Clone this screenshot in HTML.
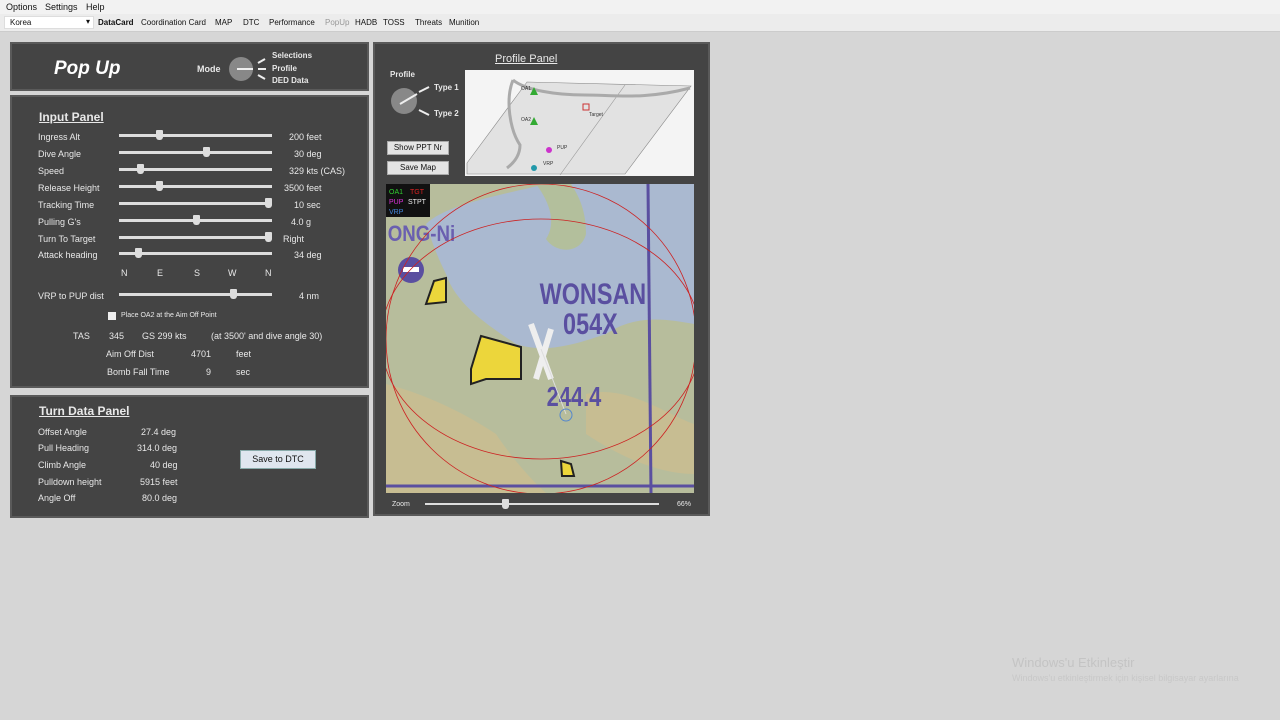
<!DOCTYPE html>
<html><head><style>
*{margin:0;padding:0;box-sizing:border-box}
body{width:1280px;height:720px;background:#d6d6d6;font-family:"Liberation Sans",sans-serif;position:relative;overflow:hidden;font-size:9px;color:#e8e8e8}
.a{position:absolute;white-space:nowrap}
.menu{position:absolute;left:0;top:0;width:1280px;height:14px;background:#f2f2f2;color:#111;font-size:9px}
.tb{position:absolute;left:0;top:14px;width:1280px;height:18px;background:#ececec;color:#111;font-size:8px;border-bottom:1px solid #ccc}
.panel{position:absolute;background:#444;border:2px solid #5a5a5a}
.sl{position:absolute;height:3px;background:#ddd}
.th{position:absolute;width:7px;height:10px;background:#ddd;border-radius:1px 1px 3px 3px}
.u{text-decoration:underline;font-size:12px;font-weight:bold}
.btn{position:absolute;background:#e4e4e4;color:#111;border:1px solid #aaa;font-size:8px;text-align:center}
</style></head><body>
<div class="menu"><span class="a" style="left:6px;top:2px">Options</span><span class="a" style="left:45px;top:2px">Settings</span><span class="a" style="left:86px;top:2px">Help</span></div>
<div class="tb">
<div class="a" style="left:4px;top:2px;width:90px;height:13px;background:#fff;border:1px solid #ddd"></div>
<span class="a" style="left:10px;top:4px">Korea</span><span class="a" style="left:86px;top:3px">▾</span>
<span class="a" style="left:98px;top:4px;font-weight:bold">DataCard</span>
<span class="a" style="left:141px;top:4px">Coordination Card</span>
<span class="a" style="left:215px;top:4px">MAP</span><span class="a" style="left:243px;top:4px">DTC</span>
<span class="a" style="left:269px;top:4px">Performance</span><span class="a" style="left:325px;top:4px;color:#999">PopUp</span>
<span class="a" style="left:355px;top:4px">HADB</span><span class="a" style="left:383px;top:4px">TOSS</span>
<span class="a" style="left:415px;top:4px">Threats</span><span class="a" style="left:449px;top:4px">Munition</span>
</div>

<div class="panel" style="left:10px;top:42px;width:359px;height:49px">
<span class="a" style="left:42px;top:14px;font-size:19px;font-weight:bold;font-style:italic;color:#fff">Pop Up</span>
<span class="a" style="left:185px;top:20px;font-weight:bold">Mode</span>
<svg class="a" style="left:213px;top:6px" width="60" height="38"><circle cx="16" cy="19" r="12" fill="#888"/><line x1="12" y1="19" x2="28" y2="19" stroke="#eee" stroke-width="2"/><line x1="33" y1="13" x2="40" y2="9" stroke="#eee" stroke-width="2"/><line x1="33" y1="19" x2="41" y2="19" stroke="#eee" stroke-width="2"/><line x1="33" y1="25" x2="40" y2="29" stroke="#eee" stroke-width="2"/></svg>
<span class="a" style="left:260px;top:7px;font-weight:bold;font-size:8px">Selections</span>
<span class="a" style="left:260px;top:20px;font-weight:bold;font-size:8px">Profile</span>
<span class="a" style="left:260px;top:32px;font-weight:bold;font-size:8px">DED Data</span>
</div>

<div class="panel" style="left:10px;top:95px;width:359px;height:293px">
<span class="a u" style="left:27px;top:13px">Input  Panel</span>
<span class="a" style="left:26px;top:35px">Ingress Alt</span><div class="sl" style="left:107px;top:37px;width:153px"></div><div class="th" style="left:144px;top:33px"></div><span class="a" style="left:277px;top:35px">200 feet</span>
<span class="a" style="left:26px;top:52px">Dive Angle</span><div class="sl" style="left:107px;top:54px;width:153px"></div><div class="th" style="left:191px;top:50px"></div><span class="a" style="left:282px;top:52px">30 deg</span>
<span class="a" style="left:26px;top:69px">Speed</span><div class="sl" style="left:107px;top:71px;width:153px"></div><div class="th" style="left:125px;top:67px"></div><span class="a" style="left:277px;top:69px">329 kts (CAS)</span>
<span class="a" style="left:26px;top:86px">Release Height</span><div class="sl" style="left:107px;top:88px;width:153px"></div><div class="th" style="left:144px;top:84px"></div><span class="a" style="left:272px;top:86px">3500 feet</span>
<span class="a" style="left:26px;top:103px">Tracking Time</span><div class="sl" style="left:107px;top:105px;width:153px"></div><div class="th" style="left:253px;top:101px"></div><span class="a" style="left:282px;top:103px">10 sec</span>
<span class="a" style="left:26px;top:120px">Pulling G's</span><div class="sl" style="left:107px;top:122px;width:153px"></div><div class="th" style="left:181px;top:118px"></div><span class="a" style="left:279px;top:120px">4.0 g</span>
<span class="a" style="left:26px;top:137px">Turn To Target</span><div class="sl" style="left:107px;top:139px;width:153px"></div><div class="th" style="left:253px;top:135px"></div><span class="a" style="left:271px;top:137px">Right</span>
<span class="a" style="left:26px;top:153px">Attack heading</span><div class="sl" style="left:107px;top:155px;width:153px"></div><div class="th" style="left:123px;top:151px"></div><span class="a" style="left:282px;top:153px">34 deg</span>
<span class="a" style="left:109px;top:171px">N</span><span class="a" style="left:145px;top:171px">E</span><span class="a" style="left:182px;top:171px">S</span><span class="a" style="left:216px;top:171px">W</span><span class="a" style="left:253px;top:171px">N</span>
<span class="a" style="left:26px;top:194px">VRP to PUP dist</span><div class="sl" style="left:107px;top:196px;width:153px"></div><div class="th" style="left:218px;top:192px"></div><span class="a" style="left:287px;top:194px">4 nm</span>
<div class="a" style="left:96px;top:215px;width:8px;height:8px;background:#eee"></div><span class="a" style="left:109px;top:215px;font-size:7px">Place OA2 at the Aim Off Point</span>
<span class="a" style="left:61px;top:234px">TAS</span><span class="a" style="left:97px;top:234px">345</span><span class="a" style="left:130px;top:234px">GS  299   kts</span><span class="a" style="left:199px;top:234px">(at 3500' and dive angle 30)</span>
<span class="a" style="left:94px;top:252px">Aim Off Dist</span><span class="a" style="left:179px;top:252px">4701</span><span class="a" style="left:224px;top:252px">feet</span>
<span class="a" style="left:95px;top:270px">Bomb Fall Time</span><span class="a" style="left:194px;top:270px">9</span><span class="a" style="left:224px;top:270px">sec</span>
</div>

<div class="panel" style="left:10px;top:395px;width:359px;height:123px">
<span class="a u" style="left:27px;top:7px">Turn  Data  Panel</span>
<span class="a" style="left:26px;top:30px">Offset Angle</span><span class="a" style="left:129px;top:30px">27.4  deg</span>
<span class="a" style="left:26px;top:46px">Pull Heading</span><span class="a" style="left:125px;top:46px">314.0  deg</span>
<span class="a" style="left:26px;top:63px">Climb Angle</span><span class="a" style="left:138px;top:63px">40  deg</span>
<span class="a" style="left:26px;top:80px">Pulldown height</span><span class="a" style="left:128px;top:80px">5915  feet</span>
<span class="a" style="left:26px;top:96px">Angle Off</span><span class="a" style="left:130px;top:96px">80.0  deg</span>
<div class="btn" style="left:228px;top:53px;width:76px;height:19px;background:#dfe6ef;border-color:#8aa;font-size:9px;line-height:17px">Save to DTC</div>
</div>

<div class="panel" style="left:373px;top:42px;width:337px;height:474px">
<span class="a" style="left:120px;top:9px;font-size:11px;text-decoration:underline">Profile  Panel</span>
<span class="a" style="left:15px;top:26px;font-weight:bold;font-size:8px">Profile</span>
<svg class="a" style="left:12px;top:38px" width="45" height="40"><circle cx="17" cy="19" r="13" fill="#888"/><line x1="13" y1="22" x2="30" y2="12" stroke="#eee" stroke-width="2"/><line x1="32" y1="10" x2="42" y2="5" stroke="#eee" stroke-width="2"/><line x1="32" y1="28" x2="42" y2="33" stroke="#eee" stroke-width="2"/></svg>
<span class="a" style="left:59px;top:39px;font-weight:bold;font-size:8px">Type 1</span>
<span class="a" style="left:59px;top:65px;font-weight:bold;font-size:8px">Type 2</span>
<div class="btn" style="left:12px;top:97px;width:62px;height:14px;line-height:12px">Show PPT Nr</div>
<div class="btn" style="left:12px;top:117px;width:62px;height:14px;line-height:12px">Save Map</div>
<svg class="a" style="left:90px;top:26px" width="229" height="106"><rect width="229" height="106" fill="#f4f4f4"/>
<polygon points="2,93 62,12 226,16 160,104 2,104" fill="#e2e2e2" stroke="#888" stroke-width="0.6"/>
<line x1="95" y1="105" x2="160" y2="15" stroke="#999" stroke-width="0.6"/>
<path d="M48,10 C60,20 90,25 120,25 C150,25 180,30 225,18" stroke="#aaa" stroke-width="3" fill="none"/>
<path d="M48,10 C40,30 45,60 55,75 C55,85 50,92 42,98" stroke="#aaa" stroke-width="3" fill="none"/>
<polygon points="69,17 73,25 65,25" fill="#3a3"/><polygon points="69,47 73,55 65,55" fill="#3a3"/>
<rect x="118" y="34" width="6" height="6" fill="none" stroke="#c33"/>
<circle cx="84" cy="80" r="3" fill="#c3c"/><circle cx="69" cy="98" r="3" fill="#29a"/>
<text x="56" y="20" font-size="5" fill="#333">OA1</text><text x="56" y="51" font-size="5" fill="#333">OA2</text><text x="124" y="46" font-size="5" fill="#333">Target</text><text x="92" y="79" font-size="5" fill="#333">PUP</text><text x="78" y="95" font-size="5" fill="#333">VRP</text>
</svg>
<svg class="a" style="left:11px;top:140px" width="308" height="309">
<rect width="308" height="309" fill="#b7bd9c"/>
<path d="M40,40 C60,20 120,10 160,0 L308,0 L308,140 C280,135 250,130 220,150 C190,160 160,170 130,160 C100,140 70,120 60,90 C50,70 45,55 40,40Z" fill="#aab9d0"/>
<path d="M150,0 C165,20 170,40 160,55 C170,70 195,70 200,50 C200,30 195,15 185,0Z" fill="#b3bf9c"/>
<path d="M0,200 C40,210 80,230 110,250 C130,280 150,300 160,309 L0,309Z" fill="#c7bd92"/>
<path d="M200,210 C240,200 280,230 308,240 L308,290 C270,290 230,270 200,250Z" fill="#c7bd92"/>
<path d="M262,0 L265,309" stroke="#5a4fa0" stroke-width="3"/><path d="M0,302 L308,302" stroke="#5a4fa0" stroke-width="3"/>
<text x="2" y="57" font-size="22" font-weight="bold" fill="#6a5fb0" transform="scale(0.85,1)">ONG-Ni</text>
<circle cx="25" cy="86" r="13" fill="#5a4fa0"/><rect x="17" y="83" width="16" height="5" fill="#fff"/>
<path d="M48,97 L60,94 L60,118 L40,120 Z" fill="#ecd63b" stroke="#222" stroke-width="2"/>
<path d="M95,152 L135,163 L135,195 L100,195 L85,200 L85,185 Z" fill="#ecd63b" stroke="#222" stroke-width="2"/>
<path d="M175,277 L185,280 L188,292 L176,292 Z" fill="#ecd63b" stroke="#222" stroke-width="2"/>
<g transform="scale(0.78,1)"><text x="197" y="120" font-size="30" font-weight="bold" fill="#5a4fa0">WONSAN</text>
<text x="227" y="150" font-size="30" font-weight="bold" fill="#5a4fa0">054X</text>
<text x="206" y="222" font-size="28" font-weight="bold" fill="#5a4fa0">244.4</text></g>
<path d="M145,140 L165,195 M165,145 L150,195" stroke="#eee" stroke-width="6"/>
<path d="M155,165 L180,230" stroke="#ddd" stroke-width="1"/><circle cx="180" cy="231" r="6" fill="none" stroke="#58c"/>
<circle cx="155" cy="155" r="155" fill="none" stroke="#c22" stroke-width="0.8"/>
<ellipse cx="155" cy="155" rx="160" ry="120" fill="none" stroke="#c22" stroke-width="0.8"/>
<rect x="0" y="0" width="44" height="33" fill="#111"/>
<text x="3" y="10" font-size="7" fill="#3c3">OA1</text><text x="24" y="10" font-size="7" fill="#d22">TGT</text>
<text x="3" y="20" font-size="7" fill="#d3d">PUP</text><text x="22" y="20" font-size="7" fill="#eee">STPT</text>
<text x="3" y="30" font-size="7" fill="#48d">VRP</text>
</svg>
<span class="a" style="left:17px;top:457px;font-size:7px">Zoom</span>
<div class="sl" style="left:50px;top:459px;width:234px;height:2px"></div><div class="th" style="left:127px;top:455px"></div>
<span class="a" style="left:302px;top:457px;font-size:7px">66%</span>
</div>
<span class="a" style="left:1012px;top:655px;font-size:13px;color:#c4c4c4">Windows'u Etkinleştir</span>
<span class="a" style="left:1012px;top:673px;font-size:9px;color:#c8c8c8">Windows'u etkinleştirmek için kişisel bilgisayar ayarlarına</span>
</body></html>
